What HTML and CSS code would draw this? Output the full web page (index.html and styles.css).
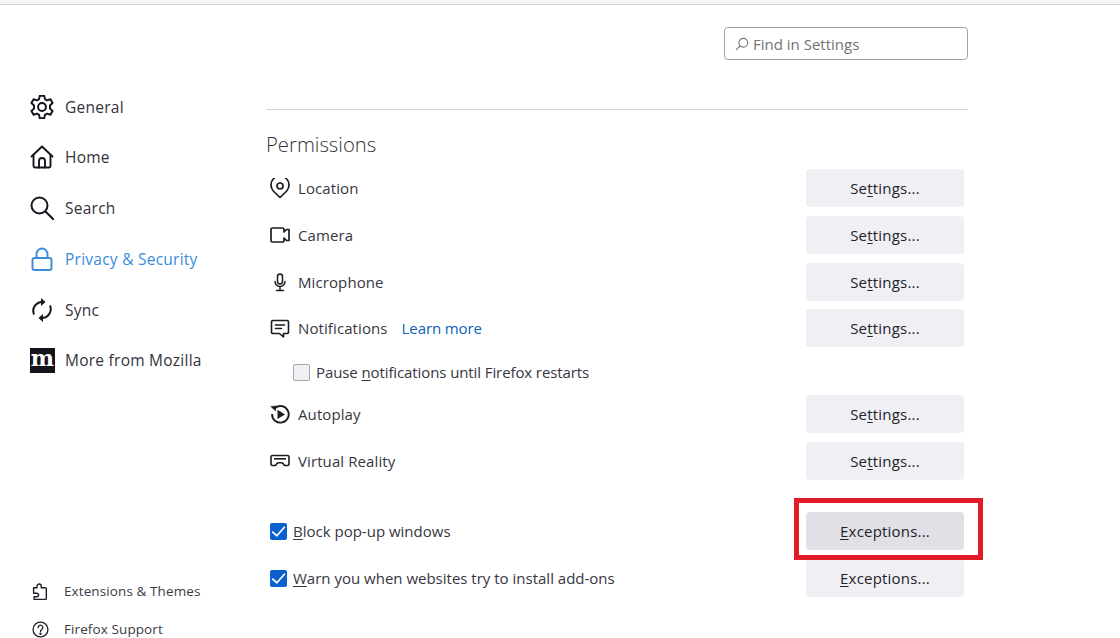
FILE: index.html
```html
<!DOCTYPE html>
<html lang="en">
<head>
<meta charset="utf-8">
<title>Settings</title>
<link rel="stylesheet" href="styles.css">
</head>
<body>
<div class="topline"></div>
<div class="page">
  <nav class="sidebar">
    <ul class="nav">
      <li class="nav-item"><svg class="nav-icon" viewBox="1 1 22 22" fill="none" stroke="currentColor" stroke-width="1.800" stroke-linejoin="round"><circle cx="12" cy="12" r="3.600"/><path d="M10 1.600h4l.7 3.200 1.900 1.100 3.100-1 2 3.500-2.400 2.200v2.800l2.400 2.200-2 3.500-3.100-1-1.900 1.100-.7 3.200h-4l-.7-3.200-1.900-1.100-3.100 1-2-3.500 2.400-2.200v-2.800L2.300 8.400l2-3.500 3.100 1 1.900-1.100z"/></svg><span>General</span></li>
      <li class="nav-item"><svg class="nav-icon" viewBox="0 0 24 24" fill="none" stroke="currentColor" stroke-width="1.900" stroke-linejoin="round" stroke-linecap="round"><path d="M1.500 11.500 12 1.500l10.500 10"/><path d="M3.500 10v11a1.500 1.500 0 0 0 1.500 1.500h14a1.500 1.500 0 0 0 1.500-1.500V10"/><path d="M9 22.500V16a3 3 0 0 1 6 0v6.500"/></svg><span>Home</span></li>
      <li class="nav-item"><svg class="nav-icon" viewBox="0 0 24 24" fill="none" stroke="currentColor" stroke-width="2" stroke-linecap="round"><circle cx="9.500" cy="9.500" r="8"/><path d="m15.500 15.500 8 8"/></svg><span>Search</span></li>
      <li class="nav-item is-active"><svg class="nav-icon" viewBox="0 0 24 24" fill="none" stroke="currentColor" stroke-width="1.900"><rect x="2.500" y="11" width="19" height="12" rx="2"/><path d="M6.500 11V7a5.500 5.500 0 0 1 11 0v4"/></svg><span>Privacy &amp; Security</span></li>
      <li class="nav-item"><svg class="nav-icon" viewBox="0 0 24 24" fill="none" stroke="currentColor" stroke-width="2"><path d="M4 16.500A9 9 0 0 1 12.500 4"/><path d="M20 7.500A9 9 0 0 1 11.500 20"/><path d="M11 0v8l4.500-4z" fill="currentColor" stroke="none"/><path d="M13 24v-8l-4.500 4z" fill="currentColor" stroke="none"/></svg><span>Sync</span></li>
      <li class="nav-item"><span class="moz-logo">m</span><span>More from Mozilla</span></li>
    </ul>
    <ul class="foot">
      <li class="foot-item"><svg class="foot-icon" viewBox="0 0 16 16" fill="none" stroke="currentColor" stroke-width="1.300" stroke-linejoin="round"><path d="M1.500 4.500h3.200V3a2 2 0 0 1 4 0v1.500h3.800c.6 0 1 .4 1 1v9c0 .6-.4 1-1 1H2v-2.500h2.500a1.700 1.700 0 0 0 0-3.400H1.500z"/></svg><span>Extensions &amp; Themes</span></li>
      <li class="foot-item"><svg class="foot-icon" viewBox="0 0 16 16" fill="none" stroke="currentColor" stroke-width="1.200" stroke-linecap="round"><circle cx="8" cy="8" r="7"/><path d="M5.800 6.200a2.200 2.200 0 1 1 3.400 1.800c-.8.500-1.200 1-1.200 1.800"/><circle cx="8" cy="12" r=".5" fill="currentColor"/></svg><span>Firefox Support</span></li>
    </ul>
  </nav>
  <main class="content">
    <div class="search-row">
      <div class="search"><svg class="search-icon" viewBox="0 0 16 16" fill="none" stroke="currentColor" stroke-width="1.300" stroke-linecap="round"><circle cx="9.500" cy="6.500" r="5"/><path d="M6 10 1.500 14.500"/></svg><span>Find in Settings</span></div>
    </div>
    <hr class="rule">
    <h1 class="title">Permissions</h1>
    <div class="rows">
      <div class="row"><div class="label"><svg class="perm-icon" viewBox="0 0 20 20" fill="none" stroke="currentColor" stroke-width="1.700" stroke-linejoin="round"><path d="M10 19.500 3.300 13A9 9 0 1 1 16.700 13z"/><circle cx="10" cy="8" r="3"/></svg><span>Location</span></div><button class="btn">Se<u>t</u>tings...</button></div>
      <div class="row"><div class="label"><svg class="perm-icon" viewBox="0 0 20 20" fill="none" stroke="currentColor" stroke-width="1.700" stroke-linejoin="round"><path d="M2.500 3h10A1.500 1.500 0 0 1 14 4.500V7l2.500-2.500h2.500v11h-2.500L14 13v2.500a1.500 1.500 0 0 1-1.500 1.500h-10A1.500 1.500 0 0 1 1 15.500v-11A1.500 1.500 0 0 1 2.500 3z"/></svg><span>Camera</span></div><button class="btn">Se<u>t</u>tings...</button></div>
      <div class="row"><div class="label"><svg class="perm-icon" viewBox="0 0 20 20" fill="none" stroke="currentColor" stroke-width="1.500" stroke-linecap="round"><rect x="7.500" y="2" width="5" height="10" rx="2.500"/><path d="M5 9.500a5 5 0 0 0 10 0M10 14.500V18M6.500 18.500h7"/></svg><span>Microphone</span></div><button class="btn">Se<u>t</u>tings...</button></div>
      <div class="row"><div class="label"><svg class="perm-icon" viewBox="0 0 20 20" fill="none" stroke="currentColor" stroke-width="1.600" stroke-linejoin="round" stroke-linecap="round"><path d="M3 2.500h14A1.500 1.500 0 0 1 18.500 4v10a1.500 1.500 0 0 1-1.500 1.500h-3.500V19L9.500 15.500H3A1.500 1.500 0 0 1 1.500 14V4A1.500 1.500 0 0 1 3 2.500z"/><path d="M5.500 7h9M5.500 10.500h6"/></svg><span>Notifications</span><a class="learn">Learn more</a></div><button class="btn">Se<u>t</u>tings...</button></div>
      <label class="sub-check"><span class="box"></span><span>Pause <u>n</u>otifications until Firefox restarts</span></label>
      <div class="row"><div class="label"><svg class="perm-icon" viewBox="0 0 20 20" fill="none" stroke="currentColor" stroke-width="1.900"><path d="M4.800 4.200A8.300 8.300 0 1 1 2.100 10"/><path d="M.8 2.500 6 2 5.500 7z" fill="currentColor" stroke-width=".5"/><path d="M7.500 5.700 15 10.500 7.500 15z" fill="currentColor" stroke="none"/></svg><span>Autoplay</span></div><button class="btn">Se<u>t</u>tings...</button></div>
      <div class="row"><div class="label"><svg class="perm-icon" viewBox="0 0 20 20" fill="none" stroke="currentColor" stroke-width="1.600" stroke-linejoin="round"><path d="M2.500 4.500h15A1.500 1.500 0 0 1 19 6v7a1.500 1.500 0 0 1-1.500 1.500h-3L13 12.500a2 2 0 0 0-1.600-.8H8.600a2 2 0 0 0-1.600.8l-1.500 2h-3A1.500 1.500 0 0 1 1 13V6a1.500 1.500 0 0 1 1.500-1.500z"/><path d="M4 7.800h12"/></svg><span>Virtual Reality</span></div><button class="btn">Se<u>t</u>tings...</button></div>
      <div class="row row-gap"><label class="check"><span class="box is-checked"><svg viewBox="0 0 16 16" fill="none" stroke="#fff" stroke-width="1.600" stroke-linecap="round" stroke-linejoin="round"><path d="m2.500 8.500 4 3.500 7-8"/></svg></span><span><u>B</u>lock pop-up windows</span></label><button class="btn is-hover"><u>E</u>xceptions...<span class="highlight"></span></button></div>
      <div class="row"><label class="check"><span class="box is-checked"><svg viewBox="0 0 16 16" fill="none" stroke="#fff" stroke-width="1.600" stroke-linecap="round" stroke-linejoin="round"><path d="m2.500 8.500 4 3.500 7-8"/></svg></span><span><u>W</u>arn you when websites try to install add-ons</span></label><button class="btn"><u>E</u>xceptions...</button></div>
    </div>
  </main>
</div>
</body>
</html>
```
FILE: styles.css
```css
* { box-sizing: border-box; }
html, body { margin: 0; height: 638px; overflow: hidden; background: #fff; }
body { font-family: "Open Sans", "Noto Sans", sans-serif; font-size: 15px; color: #2b2a33; }
ul { list-style: none; margin: 0; padding: 0; }
u { text-underline-offset: 2px; text-decoration-thickness: 1px; }

.topline { height: 5px; background: #f5f5f5; border-bottom: 1px solid #d4d4d4; }
.page { display: grid; grid-template-columns: 266px 702px; height: 634px; }

.sidebar { display: flex; flex-direction: column; justify-content: space-between; padding: 89px 0 0 30px; height: 634px; }
.nav { display: flex; flex-direction: column; gap: 25.800px; }
.nav-item { display: flex; align-items: center; gap: 11px; height: 25px; font-size: 15.500px; letter-spacing: 0.250px; white-space: nowrap; color: #33323b; }
.nav-icon { width: 24px; height: 24px; flex: none; color: #16151d; }
.is-active, .is-active .nav-icon { color: #3a8bdc; }
.moz-logo { width: 25px; height: 25px; flex: none; margin-right: -1px; background: #15141a; color: #fff; font-family: "DejaVu Serif", serif; font-weight: 700; font-size: 22px; line-height: 21px; text-align: center; letter-spacing: 0; }

.foot { display: flex; flex-direction: column; gap: 18px; height: 58px; }
.foot-item { display: flex; align-items: center; gap: 15px; height: 20px; padding-left: 2px; font-size: 13.500px; letter-spacing: 0.100px; color: #3c3b44; white-space: nowrap; }
.foot-icon { width: 17px; height: 17px; flex: none; color: #1f1e26; }

.search-row { display: flex; justify-content: flex-end; padding-top: 22px; }
.search { display: flex; align-items: center; gap: 4px; width: 244px; height: 33px; padding-left: 10px; border: 1px solid #a3a3a6; border-radius: 4px; color: #737378; font-size: 15px; letter-spacing: 0; }
.search-icon { width: 14px; height: 14px; flex: none; color: #77777c; }
.rule { margin: 49px 0 0; border: 0; border-top: 1px solid #d4d4d6; }
.title { margin: 17px 0 0; font-size: 20.300px; font-weight: 300; line-height: 34px; color: #33323b; }

.rows { display: flex; flex-direction: column; margin-top: 8px; padding-right: 4px; }
.row { display: flex; align-items: center; justify-content: space-between; height: 38px; margin-bottom: 8.800px; }
.label { display: flex; align-items: center; padding-left: 4px; white-space: nowrap; letter-spacing: 0.100px; color: #37363f; }
.perm-icon { width: 20px; height: 20px; flex: none; margin-right: 8px; color: #1c1b22; }
.learn { margin-left: 14px; color: #0b62b8; letter-spacing: -0.100px; }

.btn { position: relative; width: 158px; height: 38px; padding: 0; border: 0; border-radius: 4px; background: #f0f0f4; color: #23222b; font: inherit; letter-spacing: 0.200px; }
.is-hover { background: #e0e0e6; z-index: 1; }
.highlight { position: absolute; inset: -14px -19px -10px -12px; border: 5px solid #e21b28; pointer-events: none; }

.sub-check { display: flex; align-items: center; gap: 6px; height: 20px; margin: 6px 0 12.600px 27px; color: #37363f; letter-spacing: -0.100px; white-space: nowrap; }
.check { display: flex; align-items: center; gap: 6px; padding-left: 4px; color: #37363f; white-space: nowrap; }
.box { display: block; width: 17px; height: 17px; flex: none; border: 1px solid #a8a8ac; border-radius: 2px; background: #f0f0f4; }
.is-checked { border: 0; background: #0a60cf; }
.is-checked svg { display: block; width: 17px; height: 17px; }
.row-gap { margin-top: 24px; }
```
